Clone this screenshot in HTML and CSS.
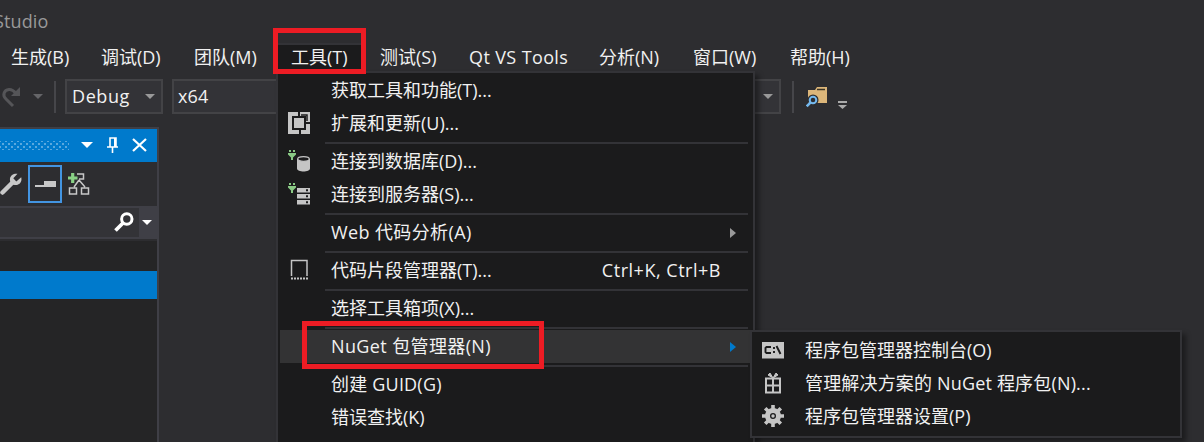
FILE: index.html
```html
<!DOCTYPE html>
<html lang="zh-CN">
<head>
<meta charset="utf-8">
<title>Studio</title>
<link rel="stylesheet" href="styles.css">
</head>
<body>
<div class="window">
  <header class="titlebar"><span class="title">Studio</span></header>
  <nav class="menubar">
    <span>生成(B)</span><span>调试(D)</span><span>团队(M)</span><span class="open">工具(T)</span><span>测试(S)</span><span class="wide">Qt VS Tools</span><span>分析(N)</span><span>窗口(W)</span><span>帮助(H)</span>
  </nav>
  <div class="toolbar">
    <svg class="redo" width="22" height="24" viewBox="0 0 22 24"><path d="M13 21 6 14C2 10 4 5 9 4.500c3-.3 5 1.500 7 4" fill="none" stroke="#555558" stroke-width="3"/><path d="M20 2v9h-9z" fill="#555558"/></svg>
    <i class="arrow dim"></i>
    <i class="divider"></i>
    <div class="combo debug"><span>Debug</span><i class="arrow"></i></div>
    <div class="combo platform"><span>x64</span><i class="arrow"></i></div>
    <i class="divider second"></i>
    <svg class="folder" width="22" height="22" viewBox="0 0 22 22"><path d="M2 4h7l2-3h10v16H2z" fill="#dcb67a"/><path d="M11 3.500h8" stroke="#3c3425" stroke-width="1.500"/><circle cx="7" cy="14" r="5.500" fill="#2d2d30"/><circle cx="7" cy="14" r="3.300" fill="none" stroke="#75b9ee" stroke-width="2"/><path d="m4.700 16.300-4 4" stroke="#75b9ee" stroke-width="2.500"/></svg>
    <svg class="overflow" width="10" height="9" viewBox="0 0 10 9"><path d="M0 0h9v2H0zM0 4h9L4.500 8z" fill="#aaa"/></svg>
  </div>
  <aside class="explorer">
    <div class="caption">
      <i class="grip"></i>
      <i class="arrow white"></i>
      <svg width="12" height="18" viewBox="0 0 12 18"><path d="M3 11V2h6v9M0 11h11M5.500 11v6M7.800 2v9" fill="none" stroke="#fff" stroke-width="1.600"/></svg>
      <svg width="15" height="14" viewBox="0 0 15 14"><path d="m1 1 13 12M14 1 1 13" stroke="#fff" stroke-width="2.200"/></svg>
    </div>
    <div class="tools">
      <svg width="22" height="22" viewBox="0 0 22 22"><path d="M2.500 19.500 13 9" stroke="#c8c8c8" stroke-width="4.500" stroke-linecap="round"/><path d="m17.500.800-4.200 4.500 3 3.200 4.900-4.200c1.200 4.200-1.700 7.700-5.200 7.700-4 0-6.500-3-6-6.500C10.400 2.300 14 .100 17.500.800z" fill="#c8c8c8"/></svg>
      <span class="pressed"><svg width="22" height="8" viewBox="0 0 22 8"><path d="M0 5h9V1h12v6H0z" fill="#c8c8c8"/></svg></span>
      <svg width="22" height="22" viewBox="0 0 22 22"><path d="M9 1h6.500v5H11M11 7l-5 7M11 7l6 7M1.500 15h7v6h-7zM13.500 15h7v6h-7z" fill="none" stroke="#c8c8c8" stroke-width="1.500"/><path d="M0 5h9.500M4.700 0v10" stroke="#89d185" stroke-width="3.200"/></svg>
    </div>
    <div class="search">
      <span class="field"><svg width="20" height="20" viewBox="0 0 20 20"><circle cx="12.800" cy="7" r="5.200" fill="none" stroke="#fff" stroke-width="3"/><path d="M9 11 1.500 18.500" stroke="#fff" stroke-width="3.800"/></svg></span>
      <span class="dropper"><i class="arrow white small"></i></span>
    </div>
    <div class="tree"><div class="selected"></div></div>
  </aside>
</div>

<div class="menu main">
  <div class="item"><span class="text">获取工具和功能(T)...</span></div>
  <div class="item"><svg class="icon" width="22" height="22" viewBox="0 0 22 22"><path d="M0 0h10v4H4v14h7v4H0zM12 0h10v10h-4V4h-6zM18 12h4v10h-9v-4h5z" fill="#c5c5c5"/><path d="M6 6h10v10H6z" fill="#c5c5c5"/><path d="M13 3h6v6" fill="none" stroke="#1b1b1c" stroke-width="1.500"/></svg><span class="text">扩展和更新(U)...</span></div>
  <hr>
  <div class="item"><svg class="icon" width="22" height="22" viewBox="0 0 22 22"><path d="M1 0h2v2H1zM5 0h2v2H5zM0 3h8v1.500L5 7.500V10H3V7.500L0 4.500z" fill="#89c984"/><path d="M9 9v9.500c0 4 13 4 13 0V9z" fill="#c5c5c5"/><ellipse cx="15.500" cy="9" rx="5.800" ry="2.300" fill="#1b1b1c" stroke="#c5c5c5" stroke-width="1.300"/></svg><span class="text">连接到数据库(D)...</span></div>
  <div class="item"><svg class="icon" width="22" height="22" viewBox="0 0 22 22"><path d="M1 0h2v2H1zM5 0h2v2H5zM0 3h8v1.500L5 7.500V10H3V7.500L0 4.500z" fill="#89c984"/><path d="M9 5h13v4.500H9zM9 11h13v4.500H9zM9 17h13v4.500H9z" fill="#c5c5c5"/><path d="M18 7.200h2M18 13.200h2M18 19.200h2" stroke="#1b1b1c" stroke-width="2"/></svg><span class="text">连接到服务器(S)...</span></div>
  <hr>
  <div class="item"><span class="text wide">Web 代码分析(A)</span><i class="more"></i></div>
  <hr>
  <div class="item"><svg class="icon" width="22" height="22" viewBox="0 0 22 22"><path d="M3.500 17V1.500h15.500V17" fill="none" stroke="#c5c5c5" stroke-width="1.500"/><path d="M3 19.500h17" stroke="#c5c5c5" stroke-width="2" stroke-dasharray="2 1"/></svg><span class="text">代码片段管理器(T)...</span><span class="keys">Ctrl+K, Ctrl+B</span></div>
  <hr>
  <div class="item"><span class="text">选择工具箱项(X)...</span></div>
  <hr>
  <div class="item active"><span class="text wide">NuGet 包管理器(N)</span><i class="more"></i></div>
  <hr>
  <div class="item"><span class="text guid">创建 GUID(G)</span></div>
  <div class="item"><span class="text">错误查找(K)</span></div>
</div>

<div class="menu sub">
  <div class="item"><svg class="icon" width="22" height="22" viewBox="0 0 22 22"><path d="M0 3h22v16.500H0z" fill="#c5c5c5"/><path d="M9 8H4.500L3.500 9v4l1 1H9M12 8v2M12 12v2M14.500 7l4 8" fill="none" stroke="#1b1b1c" stroke-width="1.900"/></svg><span class="text">程序包管理器控制台(O)</span></div>
  <div class="item"><svg class="icon" width="22" height="22" viewBox="0 0 22 22"><path d="M4 6.500h14v14H4zM4 13.500h14M11 6v14.500" fill="none" stroke="#c5c5c5" stroke-width="2"/><path d="m11 6-5-3 2-2 3 5 3-5 2 2z" fill="#c5c5c5" stroke="#c5c5c5"/></svg><span class="text solution">管理解决方案的 NuGet 程序包(N)...</span></div>
  <div class="item"><svg class="icon" width="22" height="22" viewBox="0 0 22 22"><circle cx="11" cy="11" r="5.500" fill="none" stroke="#c5c5c5" stroke-width="5"/><path d="M11 0v4M11 18v4M0 11h4M18 11h4M3.200 3.200 6 6M16 16l2.800 2.800M3.200 18.800 6 16M16 6l2.800-2.800" stroke="#c5c5c5" stroke-width="3.600"/><circle cx="11" cy="11" r="1.700" fill="#c5c5c5"/></svg><span class="text">程序包管理器设置(P)</span></div>
</div>
<div class="mark mark-menu"></div>
<div class="mark mark-item"></div>
</body>
</html>
```
FILE: styles.css
```css
* { box-sizing: border-box; }
body {
  margin: 0; width: 1204px; height: 442px; overflow: hidden; position: relative;
  background: #2d2d30; color: #f1f1f1;
  font: 18px/33px "Open Sans", "Noto Sans CJK SC", sans-serif;
  white-space: nowrap;
}
svg { display: block; flex: none; }
.window { height: 442px; display: flex; flex-direction: column; }
.titlebar { height: 43px; overflow: hidden; color: #999; padding-top: 5px; }
.title { display: block; margin-left: -6px; letter-spacing: .1px; }
.menubar {
  height: 29px; display: grid; flex: none; line-height: 29px;
  grid-template-columns: 94px 93px 90px 96px 89px 130px 94px 97px 100px;
}
.menubar span { padding-left: 7px; }
.menubar span:first-child { padding-left: 11px; }
.menubar .open { margin-left: 1px; width: 84px; background: #1b1b1c; border-top: 2px solid #333337; line-height: 25px; padding-left: 13px; }
.wide { letter-spacing: .38px; }
.guid { letter-spacing: .2px; }
.solution { letter-spacing: .17px; }
.toolbar { height: 49px; flex: none; display: flex; align-items: center; }
.arrow { display: block; flex: none; border: 5px solid transparent; border-top-color: #999; border-bottom: 0; }
.arrow.dim { margin-left: 11px; border-top-color: #656568; }
.divider { width: 2px; height: 32px; background: #46464a; margin: 0 9px 0 11px; }
.combo { height: 35px; border: 2px solid #434346; background: #333337; display: flex; align-items: center; justify-content: space-between; padding: 0 6px 0 5px; }
.debug { width: 98px; margin-right: 9px; letter-spacing: .6px; }
.platform { width: 609px; padding-left: 4px; letter-spacing: .2px; }
.divider.second { margin: 0 12px 0 11px; }
.overflow { margin: 18px 0 0 10px; }
.explorer { width: 159px; height: 315px; margin-top: 6px; border: 2px solid #3f3f46; border-left: 0; border-bottom: 0; flex: none; }
.caption { height: 33px; background: #007acc; display: flex; align-items: center; padding-bottom: 1px; }
.grip { width: 69px; height: 9px; margin-right: 12px; background: radial-gradient(circle, #59a8de .8px, transparent 1.200px) 0 0/6px 6px, radial-gradient(circle, #59a8de .8px, transparent 1.200px) 3px 3px/6px 6px; }
.arrow.white { border-width: 6px; border-bottom-width: 0; border-top-color: #fff; }
.caption svg { margin-left: 14px; }
.caption svg:last-child { margin-left: 13px; }
.tools { height: 44px; display: flex; align-items: center; }
.pressed { width: 34px; height: 38px; border: 2px solid #4395e2; margin: 0 6px; padding-left: 5px; display: flex; align-items: center; }
.search { height: 33px; display: flex; border: solid #3f3f46; border-width: 2px 0; background: #3f3f46; }
.field { width: 139px; background: #333337; display: flex; justify-content: flex-end; align-items: center; padding: 0 5px 2px 0; }
.dropper { flex: 1; display: flex; align-items: center; padding-left: 3px; }
.arrow.white.small { border-width: 5px; border-bottom-width: 0; }
.tree { height: 203px; background: #252526; border-top: 2px solid #2d2d30; padding-top: 30px; }
.selected { height: 28px; background: #007acc; }
.menu { position: absolute; background: #1b1b1c; border: 2px solid #333337; box-shadow: 4px 4px 5px rgba(0,0,0,.4); }
.main { left: 276px; top: 71px; width: 479px; height: 390px; padding: 1px 0 0 2px; }
.sub { left: 750px; top: 330px; width: 432px; height: 108px; padding: 2px 0 0 2px; }
.item { height: 33px; line-height: 33px; display: grid; grid-template-columns: 51px 1fr auto; align-items: center; }
.item .text { grid-column: 2; grid-row: 1; }
.icon { grid-column: 1; grid-row: 1; margin: -1px 0 0 8px; }
.active { background: #333334; }
.keys { grid-column: 3; grid-row: 1; margin-right: 32px; letter-spacing: .52px; }
.more { grid-column: 3; grid-row: 1; border: 5px solid transparent; border-left: 6px solid #999; border-right: 0; margin-right: 17px; }
.active .more { border-left-color: #007acc; }
.main hr { height: 2px; background: #333337; border: 0; margin: 2px 5px 1px 45px; }
.sub .icon { margin-top: -2px; }
.mark { position: absolute; border: 5px solid #ed1c24; }
.mark-menu { left: 273px; top: 28px; width: 93px; height: 46px; }
.mark-item { left: 302px; top: 321px; width: 242px; height: 48px; }
```
